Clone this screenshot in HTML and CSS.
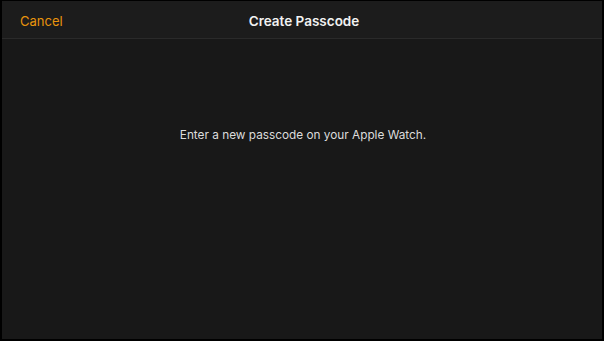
FILE: index.html
```html
<!DOCTYPE html>
<html lang="en">
<head>
    <meta charset="UTF-8">
    <title>Create Passcode</title>
    <link rel="stylesheet" href="styles.css">
</head>
<body>
    <div class="screen">
        <div class="nav-bar">
            <span class="nav-cancel">Cancel</span>
            <span class="nav-title">Create Passcode</span>
            <span class="nav-spacer"></span>
        </div>
        <div class="content">
            <p class="message">Enter a new passcode on your Apple Watch.</p>
        </div>
    </div>
</body>
</html>
```

FILE: styles.css
```css
* {
    box-sizing: border-box;
    font-family: 'Inter', 'Roboto', sans-serif;
}

body {
    margin: 0;
    background-color: #fff;
}

.screen {
    width: 604px;
    height: 341px;
    border-style: solid;
    border-color: #000;
    border-width: 1px 2px 2px 2px;
    background-color: #181818;
    display: flex;
    flex-direction: column;
}

.nav-bar {
    height: 38px;
    background-color: #1c1c1c;
    border-bottom: 1px solid #2a2a2a;
    display: flex;
    align-items: center;
    justify-content: space-between;
    padding: 0 18px 0 18px;
}

.nav-cancel {
    color: #e8940c;
    font-size: 13px;
    width: 120px;
    padding-top: 2px;
}

.nav-title {
    color: #f2f2f2;
    font-size: 13.5px;
    font-weight: 600;
    padding-top: 2px;
    padding-left: 4px;
}

.nav-spacer {
    width: 120px;
}

.content {
    flex: 1;
    display: flex;
    justify-content: center;
    padding-top: 89px;
    padding-left: 2px;
}

.message {
    margin: 0;
    color: #dcdcdc;
    font-size: 11.8px;
}
```
